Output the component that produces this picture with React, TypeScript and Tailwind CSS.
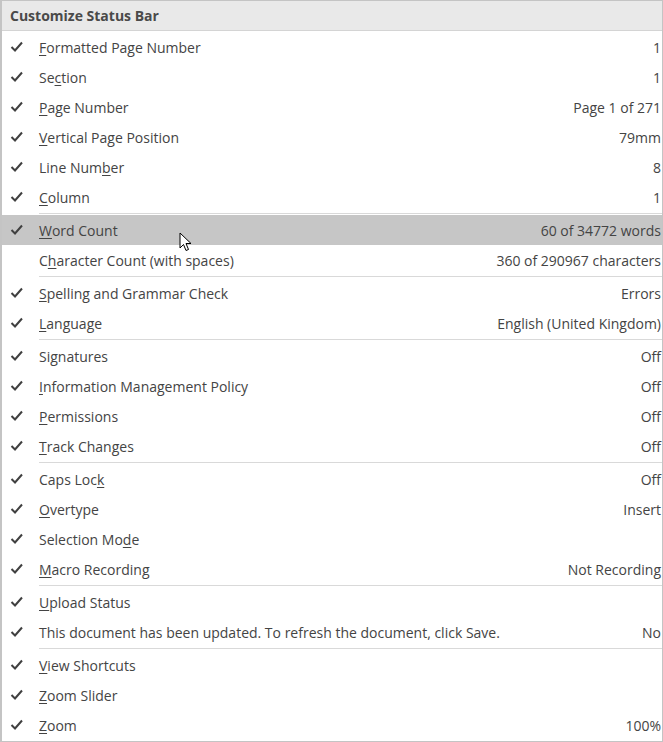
import React from "react";

type Item = {
  label: string;
  ul?: number; // index of underlined access key
  value?: string;
  checked?: boolean;
  hover?: boolean;
};

const groups: Item[][] = [
  [
    { label: "Formatted Page Number", ul: 0, value: "1", checked: true },
    { label: "Section", ul: 2, value: "1", checked: true },
    { label: "Page Number", ul: 0, value: "Page 1 of 271", checked: true },
    { label: "Vertical Page Position", ul: 0, value: "79mm", checked: true },
    { label: "Line Number", ul: 8, value: "8", checked: true },
    { label: "Column", ul: 0, value: "1", checked: true },
  ],
  [
    { label: "Word Count", ul: 0, value: "60 of 34772 words", checked: true, hover: true },
    { label: "Character Count (with spaces)", ul: 1, value: "360 of 290967 characters", checked: false },
  ],
  [
    { label: "Spelling and Grammar Check", ul: 0, value: "Errors", checked: true },
    { label: "Language", ul: 0, value: "English (United Kingdom)", checked: true },
  ],
  [
    { label: "Signatures", ul: 2, value: "Off", checked: true },
    { label: "Information Management Policy", ul: 0, value: "Off", checked: true },
    { label: "Permissions", ul: 0, value: "Off", checked: true },
    { label: "Track Changes", ul: 0, value: "Off", checked: true },
  ],
  [
    { label: "Caps Lock", ul: 8, value: "Off", checked: true },
    { label: "Overtype", ul: 0, value: "Insert", checked: true },
    { label: "Selection Mode", ul: 12, checked: true },
    { label: "Macro Recording", ul: 0, value: "Not Recording", checked: true },
  ],
  [
    { label: "Upload Status", ul: 0, checked: true },
    { label: "This document has been updated. To refresh the document, click Save.", value: "No", checked: true },
  ],
  [
    { label: "View Shortcuts", ul: 0, checked: true },
    { label: "Zoom Slider", ul: 0, checked: true },
    { label: "Zoom", ul: 0, value: "100%", checked: true },
  ],
];

function Check() {
  return (
    <svg width="14" height="12" viewBox="0 0 14 12" className="text-[#404040]">
      <path d="M1.5 6 L5 9.5 L12 1.5" fill="none" stroke="currentColor" strokeWidth="2" />
    </svg>
  );
}

function Label({ text, ul }: { text: string; ul?: number }) {
  if (ul === undefined) return <span>{text}</span>;
  return (
    <span>
      {text.slice(0, ul)}
      <span className="underline underline-offset-2">{text[ul]}</span>
      {text.slice(ul + 1)}
    </span>
  );
}

function Row({ item }: { item: Item }) {
  return (
    <div
      className={`relative flex h-[30px] items-center pr-[1px] ${item.hover ? "bg-[#c6c6c6]" : ""}`}
    >
      <div className="flex w-[37px] shrink-0 items-center pl-[8px]">{item.checked && <Check />}</div>
      <div className="flex-1 whitespace-nowrap">
        <Label text={item.label} ul={item.ul} />
      </div>
      {item.value && <div className="whitespace-nowrap text-right">{item.value}</div>}
      {item.hover && (
        <svg
          className="absolute left-[177px] top-[17px]"
          width="13"
          height="20"
          viewBox="0 0 13 20"
        >
          <path
            d="M1 1 L1 16 L4.5 12.5 L7 18.5 L9.5 17.5 L7 11.5 L12 11.5 Z"
            fill="#fff"
            stroke="#000"
            strokeWidth="1"
            strokeLinejoin="miter"
          />
        </svg>
      )}
    </div>
  );
}

export default function App() {
  return (
    <div
      className="h-[742px] w-[663px] overflow-hidden border border-l-2 border-[#c4c4c4] bg-white text-[14px] text-[#444444]"
      style={{ fontFamily: '"Open Sans", "Noto Sans", sans-serif' }}
    >
      <div className="flex h-[30px] items-center border-b border-[#d4d4d4] bg-[#e9e9e9] pl-[8px] font-bold text-[#4a4a4a]">
        Customize Status Bar
      </div>
      <div className="pt-[1px]">
        {groups.map((g, gi) => (
          <div key={gi}>
            {gi > 0 && (
              <div className="flex h-[3px] items-center pl-[37px]">
                <div className="h-px w-full bg-[#d9d9d9]" />
              </div>
            )}
            {g.map((item) => (
              <Row key={item.label} item={item} />
            ))}
          </div>
        ))}
      </div>
    </div>
  );
}
